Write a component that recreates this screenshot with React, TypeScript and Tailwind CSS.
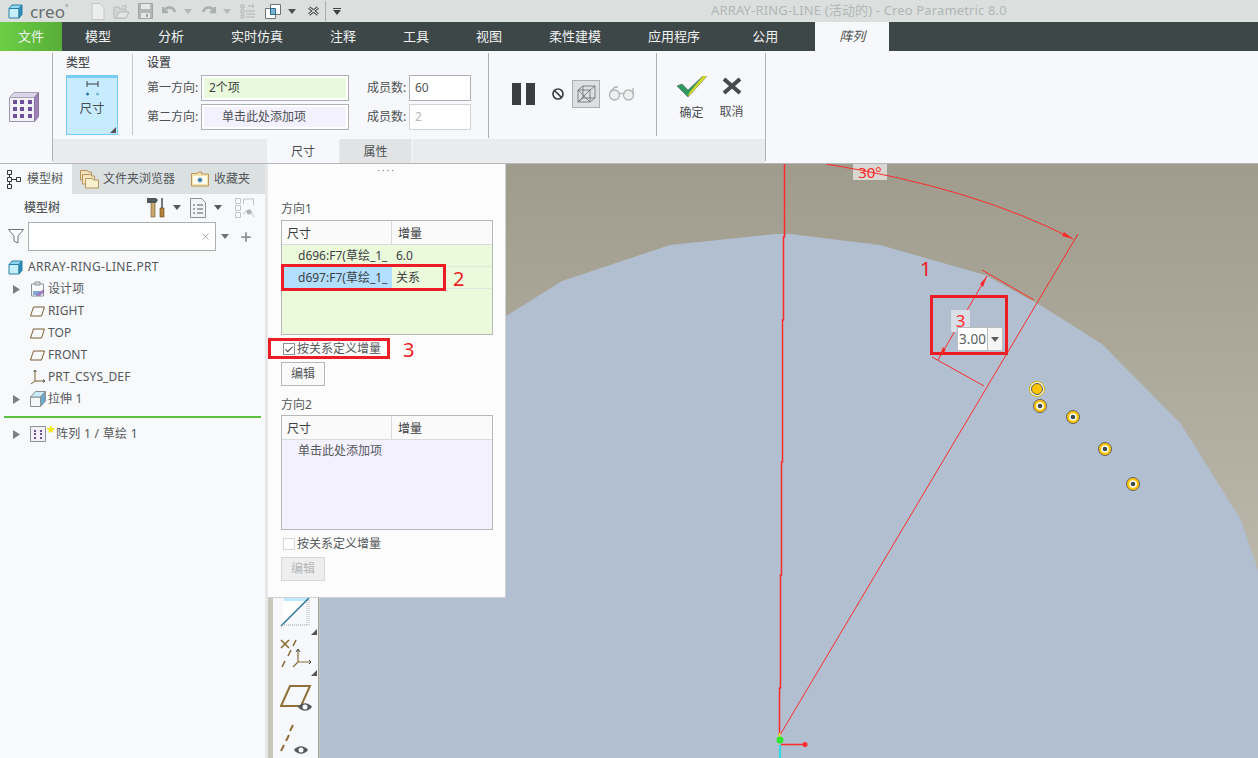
import React from 'react';
import { Check, Plus, X } from 'lucide-react';

const menus = ['模型', '分析', '实时仿真', '注释', '工具', '视图', '柔性建模', '应用程序'];

const Caret = ({ className = '' }: { className?: string }) => (
  <svg width="8" height="5" viewBox="0 0 8 5" className={className}>
    <path d="M0 0h8L4 5z" fill="currentColor" />
  </svg>
);

const Corner = () => (
  <svg width="6" height="6" viewBox="0 0 6 6" className="absolute right-[1px] bottom-[1px] text-[#555]">
    <path d="M6 0v6H0z" fill="currentColor" />
  </svg>
);

const Cube = ({ size = 15 }: { size?: number }) => (
  <svg width={size} height={size} viewBox="0 0 15 15">
    <path d="M1 4.500h10v9.500H1z" fill="#c6effb" stroke="#2a7fa5" />
    <path d="M1 4.500L4 1h10l-3 3.500z" fill="#8fd8f2" stroke="#2a7fa5" />
    <path d="M11 4.500L14 1v9.500L11 14z" fill="#2a8db8" stroke="#2a7fa5" />
  </svg>
);

const TitleBar = () => (
  <div className="relative flex h-[22px] items-center bg-[#dbe0df] text-[#a9aeae]">
    <div className="ml-[8px] flex w-[82px] items-center">
      <Cube />
      <span className="ml-[7px] text-[17px] leading-none tracking-[0.1px] text-[#6a6f70]">creo</span>
      <span className="mb-[5px] text-[7px] text-[#6a6f70]">°</span>
    </div>
    <svg width="14" height="17" viewBox="0 0 14 17" className="ml-[1px]">
      <path d="M1 .5h8l4 4v12H1z" fill="#eceeee" stroke="#c3c7c7" />
    </svg>
    <svg width="17" height="15" viewBox="0 0 17 15" className="ml-[8px]">
      <path d="M1 3h5l1 2h6v9H1z" fill="#d3d6d4" stroke="#b4b8b8" />
      <path d="M3 14l3-6h10l-3 6z" fill="#e4e6e5" stroke="#b4b8b8" />
      <path d="M9 3l4-2v3" fill="none" stroke="#b4b8b8" />
    </svg>
    <svg width="15" height="16" viewBox="0 0 15 16" className="ml-[8px]">
      <path d="M.5.5h14v15H.5z" fill="#b3b7b7" stroke="#a0a4a4" />
      <path d="M3 1h9v5H3z" fill="#e6e8e8" />
      <path d="M3 10h9v5H3z" fill="#e6e8e8" />
      <path d="M8 11h2v3H8z" fill="#a0a4a4" />
    </svg>
    <svg width="15" height="12" viewBox="0 0 15 12" className="ml-[9px]">
      <path d="M2 7c2-6 9-6 11 0M1 2v5h5" fill="none" stroke="#a9aeae" strokeWidth="2.500" />
    </svg>
    <Caret className="ml-[7px] text-[#b4b8b8]" />
    <svg width="15" height="12" viewBox="0 0 15 12" className="ml-[9px]">
      <path d="M13 7C11 1 4 1 2 7M14 2v5H9" fill="none" stroke="#a9aeae" strokeWidth="2.500" />
    </svg>
    <Caret className="ml-[7px] text-[#b4b8b8]" />
    <svg width="15" height="16" viewBox="0 0 15 16" className="ml-[9px]">
      <path d="M1 2h3v3H1zM1 7h3v3H1zM1 12h3v3H1zM6 8h9M6 11h9M6 14h9M8 3h6M12 1l2 2-2 2" fill="none" stroke="#b0b4b4" />
    </svg>
    <svg width="16" height="15" viewBox="0 0 16 15" className="ml-[10px]">
      <path d="M.5 4.500h10v10H.5z" fill="#fff" stroke="#6f7678" />
      <path d="M5.500.5h10v10h-10z" fill="#fff" stroke="#6f7678" />
      <path d="M5.500 4.500h5v6h-5z" fill="#7fb2cf" stroke="#2a6d92" />
    </svg>
    <Caret className="ml-[7px] text-[#4a4f50]" />
    <svg width="11" height="10" viewBox="0 0 11 10" className="ml-[12px]">
      <path d="M1 1.500l9 7M10 1.500l-9 7" stroke="#4a4f50" strokeWidth="3" />
      <path d="M1 1.500l9 7M10 1.500l-9 7" stroke="#fff" strokeWidth="1" />
    </svg>
    <div className="ml-[6px] h-[20px] w-px bg-[#a9aeae]" />
    <div className="ml-[7px] flex flex-col items-center text-[#3f4445]">
      <div className="mb-[1px] h-[1px] w-[8px] bg-[#3f4445]" />
      <Caret />
    </div>
    <span className="ml-[370px] text-[13px] tracking-[0.15px] whitespace-nowrap text-[#b1b6b5]">
      ARRAY-RING-LINE (活动的) - Creo Parametric 8.0
    </span>
  </div>
);

const MenuBar = () => (
  <div className="flex h-[29px] items-center bg-[#3e4748] text-[13px] text-[#f1f3f3]">
    <div className="flex h-full w-[62px] items-center justify-center bg-gradient-to-r from-[#6ccf45] to-[#57ae38]">文件</div>
    <div className="flex gap-[47px] pl-[23px]">
      {menus.map((m) => (
        <span key={m} className="whitespace-nowrap">{m}</span>
      ))}
    </div>
    <span className="ml-[52px] whitespace-nowrap">公用</span>
    <div className="ml-[37px] flex h-full w-[74px] items-center justify-center bg-[#f7f8fb] text-[#4a4f50] italic">阵列</div>
  </div>
);

const GridIcon = ({ size = 30 }: { size?: number }) => (
  <svg width={size} height={size} viewBox="0 0 30 30">
    <path d="M0.500 5.500h25v24h-25z" fill="#f3f1f8" stroke="#9d96a8" />
    <path d="M0.500 5.500L5 0.500h24.500l-4 5z" fill="#dcd4e8" stroke="#aaa3b5" />
    <path d="M25.500 5.500l4-5v24l-4 5z" fill="#9d83b8" stroke="#8a76a0" />
    {[9, 16, 23].map((y) =>
      [5, 12, 20].map((x) => <rect key={`${x}-${y}`} x={x - 1} y={y - 1} width="4" height="4" fill="#6d4f9a" />)
    )}
  </svg>
);

const Ribbon = () => (
  <div className="flex h-[112px] bg-[#f7f8fb] text-[12px] text-[#4b4f52]">
    <div className="flex w-[52px] items-center pl-[9px]">
      <GridIcon />
    </div>
    <div className="mt-[2px] mb-[2px] w-px bg-[#aeb1b3]" />
    <div className="flex w-[712px] flex-col">
      <div className="flex h-[88px]">
        {/* type group */}
        <div className="w-[79px] pt-[3px] pl-[13px]">
          <div className="h-[21px] leading-[17px] font-medium">类型</div>
          <div className="relative flex h-[60px] w-[52px] flex-col items-center border border-t-[3px] border-[#77cdf7] bg-[#c8ecff] pt-[3px]">
            <svg width="13" height="16" viewBox="0 0 13 16">
              <path d="M1 0v6M12 0v6M1 3h11" fill="none" stroke="#3a3f42" />
              <circle cx="1.500" cy="13" r="1.500" fill="#2d7aa8" />
              <circle cx="11.500" cy="13" r="1.500" fill="#7cb4d2" />
            </svg>
            <span className="mt-[4px] text-[12.500px] leading-[16px]">尺寸</span>
            <Corner />
          </div>
        </div>
        <div className="mt-[3px] mb-[4px] w-px bg-[#c4c7c9]" />
        {/* settings group */}
        <div className="w-[355px] pt-[3px] pl-[14px]">
          <div className="h-[21px] leading-[17px] font-medium">设置</div>
          <div className="flex h-[26px] items-center">
            <span className="w-[54px]">第一方向:</span>
            <div className="h-[26px] w-[148px] border border-[#aeb1b3] bg-[#fff] p-[2px]">
              <div className="flex h-full items-center bg-[#e8fadb] pl-[5px] text-[#3c4043]">2个项</div>
            </div>
            <span className="ml-[18px] w-[42px]">成员数:</span>
            <div className="flex h-[26px] w-[62px] items-center border border-[#aeb1b3] bg-white pl-[5px] text-[#555]">60</div>
          </div>
          <div className="mt-[3px] flex h-[26px] items-center">
            <span className="w-[54px]">第二方向:</span>
            <div className="h-[26px] w-[148px] border border-[#aeb1b3] bg-[#fff] p-[2px]">
              <div className="flex h-full items-center bg-[#f4f1ff] pl-[18px]">单击此处添加项</div>
            </div>
            <span className="ml-[18px] w-[42px]">成员数:</span>
            <div className="flex h-[26px] w-[62px] items-center border border-[#d0d2d4] bg-white pl-[5px] text-[#b8babc]">2</div>
          </div>
        </div>
        <div className="mt-[2px] mb-[1px] w-px bg-[#aeb1b3]" />
        {/* playback group */}
        <div className="flex w-[167px] items-center pb-[3px]">
          <svg width="23" height="22" viewBox="0 0 23 22" className="ml-[23px]">
            <path d="M0 0h9v22H0zM14 0h9v22h-9z" fill="#3b3e40" />
          </svg>
          <svg width="12" height="12" viewBox="0 0 12 12" className="ml-[17px]">
            <circle cx="6" cy="6" r="5" fill="none" stroke="#3b3e40" strokeWidth="1.700" />
            <path d="M2.500 2.500l7 7" stroke="#3b3e40" strokeWidth="1.700" />
          </svg>
          <div className="ml-[8px] flex h-[28px] w-[28px] items-center justify-center border border-[#aeb1b3] bg-[#dde0e3]">
            <svg width="19" height="18" viewBox="0 0 19 18">
              <path d="M1 5l5-4h12M1 5h12l5-4v12l-5 4H1zM13 5v12M1 5l12 12M13 5L1 17M6 1v12h12M6 13l-5 4" fill="none" stroke="#6a6d70" strokeWidth="0.800" />
            </svg>
          </div>
          <svg width="28" height="15" viewBox="0 0 28 15" className="ml-[8px]">
            <circle cx="6.500" cy="9" r="5" fill="#eef0f0" stroke="#b0b3b5" strokeWidth="1.300" />
            <circle cx="20.500" cy="9" r="5" fill="#eef0f0" stroke="#b0b3b5" strokeWidth="1.300" />
            <path d="M11 8c2-1 3-1 5 0M2 6l5-5h3M25 8V2" fill="none" stroke="#b0b3b5" strokeWidth="1.300" />
          </svg>
        </div>
        <div className="mt-[2px] mb-[3px] w-px bg-[#aeb1b3]" />
        {/* ok / cancel */}
        <div className="flex w-[108px] gap-[11px] pt-[25px] pl-[20px]">
          <div className="flex w-[29px] flex-col items-center">
            <svg width="30" height="21" viewBox="0 0 30 21">
              <path d="M0 10l5-2 6 6L26 0h4L11 21z" fill="#2f9a5f" stroke="#3f4a45" strokeWidth="0.500" />
              <path d="M26 0h4L11 21l1-4z" fill="#d8d72c" />
            </svg>
            <span className="mt-[7px] whitespace-nowrap">确定</span>
          </div>
          <div className="flex w-[29px] flex-col items-center">
            <svg width="20" height="21" viewBox="0 0 20 21">
              <path d="M2 3l16 14M18 3L2 17" stroke="#48494b" strokeWidth="4" />
            </svg>
            <span className="mt-[6px] whitespace-nowrap">取消</span>
          </div>
        </div>
      </div>
      <div className="flex h-[24px] bg-[#e9ebed]">
        <div className="ml-[214px] flex w-[72px] items-center justify-center bg-[#f7f8fb] pt-[2px]">尺寸</div>
        <div className="ml-[1px] flex w-[71px] items-center justify-center bg-[#e1e3e4] pt-[2px]">属性</div>
        <div className="ml-px w-px bg-[#f7f8fb]" />
      </div>
    </div>
    <div className="mt-[2px] mb-[2px] w-px bg-[#aeb1b3]" />
  </div>
);

const PlaneIcon = () => (
  <svg width="15" height="11" viewBox="0 0 15 11">
    <path d="M3.500 1h11l-3 9H.500z" fill="none" stroke="#7a5f30" strokeWidth="1" />
  </svg>
);

const Arrow = () => (
  <svg width="7" height="9" viewBox="0 0 7 9" className="text-[#7d8082]">
    <path d="M0 0l7 4.500L0 9z" fill="currentColor" />
  </svg>
);

type Row = { arrow?: boolean; icon: React.ReactNode; label: React.ReactNode };

const treeRows: Row[] = [
  {
    arrow: true,
    icon: (
      <svg width="15" height="16" viewBox="0 0 15 16">
        <path d="M1.500 3h12v12h-12z" fill="#fbfbfb" stroke="#8d9092" />
        <path d="M5 1h5v3H5z" fill="#dfe0e2" stroke="#8d9092" />
        <path d="M3 10h8v4H3z" fill="#7fa9d8" />
        <path d="M6 14l7-5 1 2-5 4z" fill="#a783c8" stroke="#7b5c9b" strokeWidth="0.500" />
      </svg>
    ),
    label: '设计项',
  },
  { icon: <PlaneIcon />, label: 'RIGHT' },
  { icon: <PlaneIcon />, label: 'TOP' },
  { icon: <PlaneIcon />, label: 'FRONT' },
  {
    icon: (
      <svg width="16" height="16" viewBox="0 0 16 16">
        <path d="M5 1v11L1 15M5 12h10" fill="none" stroke="#7a5f30" />
        <path d="M3.500 3L5 1l1.500 2M13 10.500l2 1.500-2 1.500" fill="none" stroke="#3c3f41" strokeWidth="0.800" />
      </svg>
    ),
    label: 'PRT_CSYS_DEF',
  },
  {
    arrow: true,
    icon: (
      <svg width="16" height="16" viewBox="0 0 16 16">
        <path d="M.500 6h10v9.500H.500z" fill="#f4f5f6" stroke="#8d9092" />
        <path d="M.500 6L5.500.500h10L10.500 6z" fill="#c8ecfa" stroke="#8d9092" />
        <path d="M10.500 6l5-5.500v9.500l-5 5.500z" fill="#6aa9cb" stroke="#8d9092" />
      </svg>
    ),
    label: '拉伸 1',
  },
];

const LeftPanel = () => (
  <div className="flex w-[265px] shrink-0 flex-col bg-[#f7f9fb] text-[12px] text-[#54585b]">
    <div className="flex h-[30px] bg-[#dbe0e0]">
      <div className="flex w-[72px] items-center bg-[#f7f9fb] pl-[7px]">
        <svg width="14" height="19" viewBox="0 0 14 19">
          <path d="M.500.500h4v4h-4zM.500 7.500h4v4h-4zM.500 14.500h4v4h-4zM9.500 7.500h4v4h-4zM2.500 4.500v3M2.500 11.500v3M4.500 9.500h5" fill="none" stroke="#33373a" />
        </svg>
        <span className="ml-[6px]">模型树</span>
      </div>
      <div className="ml-[8px] flex items-center">
        <svg width="19" height="19" viewBox="0 0 19 19">
          <path d="M.500 .500h7l1 1.500h3v8h-11z" fill="#efe2bb" stroke="#b9955a" />
          <path d="M2.500 4.500h8l1 1.500h3v8h-12z" fill="#f3e6c0" stroke="#b9955a" />
          <path d="M5.500 8.500h7l1 1.500h5v8h-13z" fill="#f9f0cf" stroke="#b9955a" />
        </svg>
        <span className="ml-[4px]">文件夹浏览器</span>
      </div>
      <div className="ml-[16px] flex items-center">
        <svg width="18" height="16" viewBox="0 0 18 16">
          <path d="M.500 2.500h6l1-1.500h3v2h7v12h-17z" fill="#f3e3ae" stroke="#b9955a" />
          <path d="M2 5h14v8H2z" fill="#fdfaf0" />
          <path d="M9 6.500v5M6.800 7.800l4.400 2.400M11.200 7.800l-4.400 2.400" stroke="#1f6b9a" strokeWidth="1.100" />
        </svg>
        <span className="ml-[5px]">收藏夹</span>
      </div>
    </div>
    <div className="flex h-[27px] items-center pl-[24px]">
      <span className="w-[123px] font-medium">模型树</span>
      <svg width="18" height="21" viewBox="0 0 18 21">
        <path d="M4 4h4v16H4z" fill="#c9a86a" stroke="#6b5230" strokeWidth="0.600" />
        <path d="M0 1h9l2 2-2 3H0z" fill="#50585c" />
        <path d="M14 1h2v10h-2z" fill="#70777a" />
        <path d="M13 11h4v9h-4z" fill="#b9823a" stroke="#5e4220" strokeWidth="0.600" />
      </svg>
      <Caret className="ml-[8px] text-[#55595c]" />
      <svg width="16" height="20" viewBox="0 0 16 20" className="ml-[9px]">
        <path d="M.500.500h11l4 4v15H.500z" fill="#f2f4f5" stroke="#8d9092" />
        <path d="M3 7h2M7 7h6M3 11h2M7 11h6M3 15h2M7 15h6" stroke="#54585b" />
      </svg>
      <Caret className="ml-[8px] text-[#55595c]" />
      <svg width="20" height="20" viewBox="0 0 20 20" className="ml-[13px]">
        <path d="M.500.500h5v5h-5zM.500 7.500h5v5h-5zM.500 14.500h5v5h-5zM8.500 1h10M8.500 1v5M18.500 1v6M8 16l3-3 4-1 4 7" fill="none" stroke="#c2c5c6" />
        <circle cx="14" cy="14" r="2.500" fill="#b0b3b5" />
      </svg>
    </div>
    <div className="mt-[1px] flex h-[29px] items-center pl-[8px]">
      <svg width="16" height="15" viewBox="0 0 16 15">
        <path d="M.500.500h15L10 7v7l-4-2V7z" fill="#fff" stroke="#6f7375" />
      </svg>
      <div className="ml-[4px] flex h-[29px] w-[188px] items-center justify-end border border-[#a9b0b0] bg-white pr-[4px]">
        <X size={11} className="text-[#a5a8aa]" />
      </div>
      <Caret className="ml-[5px] text-[#6f7375]" />
      <Plus size={14} strokeWidth={3} className="ml-[10px] text-[#8d9092]" />
    </div>
    <div className="mt-[5px] flex h-[22px] items-center pl-[8px]">
      <Cube />
      <span className="ml-[5px] tracking-[0.35px]">ARRAY-RING-LINE.PRT</span>
    </div>
    {treeRows.map((r, i) => (
      <div key={i} className="flex h-[22px] items-center pl-[13px]">
        <div className="w-[14px]">{r.arrow && <Arrow />}</div>
        <div className="flex w-[21px] justify-center">{r.icon}</div>
        <span className="tracking-[0.1px]">{r.label}</span>
      </div>
    ))}
    <div className="mx-[4px] mt-[6px] h-[2px] bg-[#5cc13f]" />
    <div className="mt-[5px] flex h-[22px] items-center pl-[13px]">
      <div className="w-[14px]"><Arrow /></div>
      <div className="flex w-[21px] justify-center">
        <svg width="16" height="16" viewBox="0 0 16 16">
          <path d="M.500.500h15v15H.500z" fill="#f3f1f8" stroke="#8d9092" />
          {[4, 7, 11].map((y) => [4, 10].map((x) => <rect key={`${x}-${y}`} x={x} y={y} width="2" height="2" fill="#6d4f9a" />))}
        </svg>
      </div>
      <span className="mb-[6px] ml-[-1px] w-[9px] text-[15px] leading-none font-bold text-[#f0e800]">*</span>
      <span className="tracking-[0.3px]">阵列 1 / 草绘 1</span>
    </div>
  </div>
);

const TableHead = () => (
  <div className="flex h-[24px] border-b border-[#d8dadb] bg-[#fafafa] pr-[4px] text-[#3c4043]">
    <div className="flex w-[110px] items-center border-r border-[#d8dadb] pt-[3px] pl-[5px]">尺寸</div>
    <div className="flex items-center pt-[3px] pl-[6px]">增量</div>
  </div>
);

const Popup = () => (
  <div className="absolute top-0 left-0 h-[434px] w-[238px] border-r border-b border-[#cfd1d2] bg-[#fcfcfc] px-[13px] text-[12px] text-[#54585b]">
    <div className="pt-[1px] text-center text-[10px] leading-[11px] tracking-[2px] text-[#7d8082]">····</div>
    <div className="mt-[25px] h-[19px] leading-[16px]">方向1</div>
    <div className="h-[115px] w-[212px] border border-[#b5b7b8] bg-[#ecfadc]">
      <TableHead />
      <div className="flex h-[22px] border-b border-[#e1e8dc] text-[#3c4043]">
        <div className="w-[110px] truncate pl-[16px] leading-[21px]">d696:F7(草绘_1_</div>
        <div className="pl-[4px] leading-[21px]">6.0</div>
      </div>
      <div className="flex h-[22px] border-b border-[#e1e8dc] text-[#3c4043]">
        <div className="ml-px w-[109px] truncate bg-[#b3dfff] pl-[15px] leading-[21px]">d697:F7(草绘_1_</div>
        <div className="pl-[4px] leading-[21px]">关系</div>
      </div>
    </div>
    {/* annotation boxes */}
    <div className="absolute top-[100px] left-[13px] h-[27px] w-[165px] border-[3px] border-[#ee1c25]" />
    <span className="absolute top-[101px] left-[185px] text-[20px] leading-[27px] text-[#ee1c25]">2</span>
    <div className="absolute top-[174px] left-0 h-[21px] w-[122px] border-[3px] border-[#ee1c25]" />
    <span className="absolute top-[172px] left-[135px] text-[20px] leading-[27px] text-[#ee1c25]">3</span>
    <div className="mt-[7px] flex h-[14px] items-center pl-[2px]">
      <div className="flex h-[12px] w-[12px] items-center justify-center border border-[#8d9092] bg-white">
        <Check size={11} strokeWidth={2.500} className="text-[#333]" />
      </div>
      <span className="ml-[2px]">按关系定义增量</span>
    </div>
    <button className="mt-[6px] block h-[24px] w-[44px] border border-[#b5b7b8] bg-[#fafafa] text-[12px] text-[#54585b]">编辑</button>
    <div className="mt-[10px] h-[19px] leading-[17px]">方向2</div>
    <div className="h-[115px] w-[212px] border border-[#b5b7b8] bg-[#f4f1ff]">
      <TableHead />
      <div className="pt-[1px] pl-[16px] leading-[20px]">单击此处添加项</div>
    </div>
    <div className="mt-[7px] flex h-[13px] items-center pl-[2px]">
      <div className="h-[12px] w-[12px] border border-[#d5d7d8] bg-white" />
      <span className="ml-[2px]">按关系定义增量</span>
    </div>
    <button className="mt-[7px] block h-[24px] w-[44px] border border-[#d5d7d8] bg-[#eeeeee] text-[12px] text-[#b4b7b9]">编辑</button>
  </div>
);

const SideTools = () => (
  <div className="absolute top-[434px] bottom-0 left-0 flex w-[52px] bg-[#c9c8bd]">
    <div className="ml-[5px] flex w-[46px] flex-col border-r border-[#9ea1a3] bg-[#f7f8fb] pl-[7px]">
      <div className="relative h-[38px]">
        <svg width="30" height="30" viewBox="0 0 30 30" className="mt-[-1px]">
          <path d="M1 29L29 1v28z" fill="#f7f8fb" />
          <path d="M3 4h22L3 26z" fill="#fff" />
          <path d="M4 1h26l-3 3H4z" fill="#bde9fb" />
          <path d="M27 3v25M29 3v25" stroke="#bcbcbc" strokeDasharray="1 1" />
          <path d="M1 29L29 1" stroke="#1b6f99" strokeWidth="1.200" />
          <path d="M2 28h26" stroke="#999" strokeDasharray="1 1" />
        </svg>
        <Corner />
      </div>
      <div className="relative mt-[3px] h-[38px]">
        <svg width="32" height="32" viewBox="0 0 32 32">
          <path d="M1 1l8 8M9 1L1 9M16 1l-3 6M11 11l-3 6M5 22l-3 6" stroke="#8a6a34" strokeWidth="1.600" fill="none" />
          <path d="M18 10v13l-5 5M18 23h13" stroke="#8a6a34" strokeWidth="1.200" fill="none" />
          <path d="M16 13l2-3 2 3M29 21l2 2-2 2" stroke="#3c3f41" fill="none" />
        </svg>
        <Corner />
      </div>
      <div className="relative mt-[7px] h-[39px]">
        <svg width="32" height="28" viewBox="0 0 32 28">
          <path d="M10 2h20l-9 20H1z" fill="none" stroke="#8f6f38" strokeWidth="2" />
          <path d="M18 23c4-5 10-5 14 0-4 5-10 5-14 0z" fill="#54585b" />
          <circle cx="25" cy="23" r="2.500" fill="#fff" />
        </svg>
      </div>
      <div className="relative mt-[1px] h-[32px]">
        <svg width="32" height="30" viewBox="0 0 32 30">
          <path d="M13 1l-3 6M9 11l-3 6M4 21l-3 6" stroke="#8f6f38" strokeWidth="2" fill="none" />
          <path d="M14 26c4-5 10-5 14 0-4 5-10 5-14 0z" fill="#54585b" />
          <circle cx="21" cy="26" r="2.500" fill="#fff" />
        </svg>
      </div>
    </div>
  </div>
);

const Marker = ({ x, y }: { x: number; y: number }) => (
  <g>
    <circle cx={x} cy={y} r="6.500" fill="#ffc400" stroke="#5f6165" />
    <circle cx={x} cy={y} r="3.800" fill="#fff" />
    <circle cx={x} cy={y} r="2.300" fill="#44474c" />
  </g>
);

const Canvas = () => (
  <div className="relative flex-1 bg-gradient-to-b from-[#9f9b8d] to-[#c8c5b8]">
    {/* sits under the sketch, the arc runs across it */}
    <div className="absolute top-0 left-[585px] h-[16px] w-[34px] bg-[#d8d7d2] text-center text-[15px] leading-[16px] text-[#ff2b2b]">30°</div>
    <svg viewBox="268 164 990 594" className="absolute inset-0 h-full w-full">
      <path d="M506 316L562 281L670 245L775 234L790 234L880 245L985 275L1040 305L1102 344L1181 424L1241 520L1258 570V758H506z" fill="#b1bfd0" />
      <path d="M319 598H506V758H319z" fill="#b1bfd0" />
      <g fill="none" stroke="#ff2b2b" strokeWidth="1">
        <path d="M784.500 164V237H783.500V320H782.500V462H781.500V575H780.500V688H779.500V735" strokeWidth="1.500" />
        <path d="M780 735L1078 234" />
        <path d="M826 164Q975 188 1073 239" />
        <path d="M982 270L1034 300M932 357L984 386M987 276L938 360" />
      </g>
      <path d="M1073 239L1062 236L1064 232zM987 276L983 287L980 284zM939 357L943 347L946 350z" fill="#ff2b2b" />
      <path d="M780 733L779 737" stroke="#f0e800" strokeWidth="1.500" />
      <path d="M780 745V758" stroke="#27e0e0" strokeWidth="2" />
      <path d="M781 744.500H805" stroke="#ff2b2b" strokeWidth="1.500" />
      <circle cx="805" cy="744.500" r="2.500" fill="#ff2b2b" />
      <circle cx="780" cy="740" r="3.500" fill="#2fe52f" />
      <circle cx="1037" cy="389" r="7.500" fill="#fff" stroke="#d8b400" />
      <circle cx="1037" cy="389" r="5.500" fill="#ffc400" stroke="#55585c" />
      <circle cx="1037" cy="389" r="3.800" fill="#ffc400" />
      <Marker x={1040} y={406} />
      <Marker x={1073} y={417} />
      <Marker x={1105} y={449} />
      <Marker x={1133} y={484} />
    </svg>
    <span className="absolute top-[93px] left-[652px] text-[20px] leading-[24px] text-[#ee1c25]">1</span>
    <div className="absolute top-[146px] left-[683px] h-[22px] w-[19px] bg-[#d9dfe6] text-center text-[17px] leading-[22px] text-[#ff2b2b]">3</div>
    <div className="absolute top-[163px] left-[689px] flex h-[24px] w-[46px] border border-[#b9bcbf] bg-white text-[13.500px] text-[#5a5d60]">
      <span className="flex w-[30px] items-center justify-center border-r border-[#b9bcbf]">3.00</span>
      <span className="flex flex-1 items-center justify-center bg-[#f5f5f5]"><Caret className="text-[#5a5d60]" /></span>
    </div>
    <div className="absolute top-[131px] left-[662px] h-[60px] w-[78px] border-[3px] border-[#ee1c25]" />
    <SideTools />
    <Popup />
  </div>
);

export default function App() {
  return (
    <div className="flex h-[758px] w-[1258px] flex-col overflow-hidden bg-[#f7f8fb] [font-family:'Noto_Sans','Noto_Sans_CJK_SC',sans-serif]">
      <TitleBar />
      <MenuBar />
      <Ribbon />
      <div className="h-px bg-[#b5b8ba]" />
      <div className="flex h-[594px]">
        <LeftPanel />
        <div className="flex w-[3px] bg-[#e6e8e8]" />
        <Canvas />
      </div>
    </div>
  );
}
